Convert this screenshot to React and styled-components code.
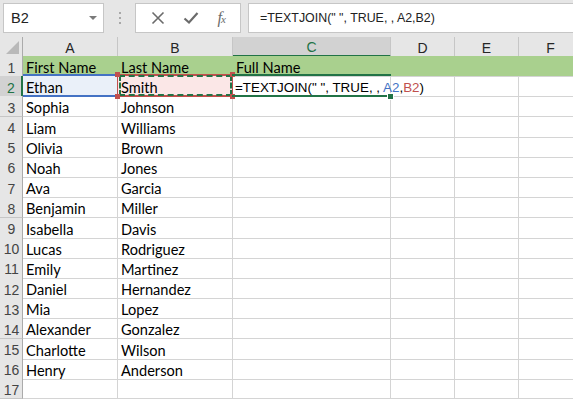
import React from "react";
import styled, { createGlobalStyle } from "styled-components";

const GlobalStyle = createGlobalStyle`
  html, body {
    margin: 0;
    padding: 0;
    background: #ffffff;
    overflow: hidden;
  }
  body {
    font-family: "Liberation Sans", Arial, sans-serif;
  }
`;

const GREEN = "#217346";
const GRID = "#d4d4d4";
const RED = "#c0504d";
const BLUE = "#4472c4";
const HEAD_FILL = "#a9d08e";

const COLS = [
  { key: "A", width: 95 },
  { key: "B", width: 115 },
  { key: "C", width: 158 },
  { key: "D", width: 64 },
  { key: "E", width: 64 },
  { key: "F", width: 64 },
];
const TEMPLATE = `23px ${COLS.map((c) => c.width + "px").join(" ")}`;

const PEOPLE = [
  ["Ethan", "Smith"],
  ["Sophia", "Johnson"],
  ["Liam", "Williams"],
  ["Olivia", "Brown"],
  ["Noah", "Jones"],
  ["Ava", "Garcia"],
  ["Benjamin", "Miller"],
  ["Isabella", "Davis"],
  ["Lucas", "Rodriguez"],
  ["Emily", "Martinez"],
  ["Daniel", "Hernandez"],
  ["Mia", "Lopez"],
  ["Alexander", "Gonzalez"],
  ["Charlotte", "Wilson"],
  ["Henry", "Anderson"],
];

// ---------- formula bar ----------
const Page = styled.div`
  width: 573px;
  height: 399px;
  overflow: hidden;
  background: #e6e6e6;
`;

const Toolbar = styled.div`
  height: 37px;
  display: flex;
  align-items: flex-start;
  padding: 3px 0 0 3px;
  box-sizing: border-box;
`;

const Box = styled.div`
  height: 30px;
  box-sizing: border-box;
  background: #ffffff;
  border: 1px solid #c6c6c6;
  display: flex;
  align-items: center;
`;

const NameBox = styled(Box)`
  width: 101px;
  padding: 0 6px 0 7px;
  justify-content: space-between;
  font-size: 14.5px;
  color: #222;
`;

const Caret = styled.span`
  width: 0;
  height: 0;
  border-left: 4px solid transparent;
  border-right: 4px solid transparent;
  border-top: 4px solid #7a7a7a;
`;

const Grip = styled.div`
  width: 31px;
  height: 30px;
  display: flex;
  flex-direction: column;
  align-items: center;
  justify-content: center;
  gap: 3px;
  span {
    width: 2px;
    height: 2px;
    background: #a8a8a8;
  }
`;

const Actions = styled(Box)`
  width: 106px;
  justify-content: space-around;
  padding: 0 6px;
  color: #6b6b6b;
`;

const Fx = styled.span`
  font-family: "Liberation Serif", "Times New Roman", serif;
  font-style: italic;
  font-size: 16px;
  color: #6b6b6b;
  letter-spacing: -1px;
  sub {
    font-size: 11px;
    vertical-align: 0;
  }
`;

const FormulaBox = styled(Box)`
  flex: 1;
  margin-left: 7px;
  margin-right: -4px;
  padding-left: 11px;
  font-size: 12.4px;
  color: #222;
  white-space: nowrap;
`;

// ---------- sheet ----------
const Sheet = styled.div`
  background: #ffffff;
  height: 362px;
  overflow: hidden;
`;

const Row = styled.div`
  display: grid;
  grid-template-columns: ${TEMPLATE};
  height: ${(p) => (p.$header ? "19px" : "20.2px")};
  background: ${(p) => (p.$header ? "#e6e6e6" : "#ffffff")};
`;

const Corner = styled.div`
  border-right: 1px solid #ababab;
  border-bottom: 1px solid #ababab;
  display: flex;
  align-items: flex-end;
  justify-content: flex-end;
  padding: 0 3px 2px 0;
`;

const ColHead = styled.div`
  display: flex;
  align-items: center;
  justify-content: center;
  padding-top: 2px;
  font-size: 14px;
  color: ${(p) => (p.$active ? GREEN : "#262626")};
  background: ${(p) => (p.$active ? "#d2d2d2" : "#e6e6e6")};
  border-right: 1px solid #c6c6c6;
  border-bottom: ${(p) => (p.$active ? `2px solid ${GREEN}` : "1px solid #ababab")};
`;

const RowHead = styled.div`
  display: flex;
  align-items: center;
  justify-content: center;
  padding: 3px 0 0 1px;
  font-size: 14px;
  color: ${(p) => (p.$active ? GREEN : "#444444")};
  background: ${(p) => (p.$active ? "#d2d2d2" : "#e6e6e6")};
  border-bottom: 1px solid #c6c6c6;
  border-right: ${(p) => (p.$active ? `2px solid ${GREEN}` : "1px solid #ababab")};
`;

const Cell = styled.div`
  position: relative;
  display: flex;
  align-items: center;
  padding: 3px 3px 0;
  font-family: Lato, "Liberation Sans", sans-serif;
  font-size: 14.6px;
  color: #000000;
  white-space: nowrap;
  background: ${(p) => p.$fill || "transparent"};
  border-right: 1px solid ${(p) => (p.$fill === HEAD_FILL ? HEAD_FILL : GRID)};
  border-bottom: 1px solid ${GRID};
  z-index: ${(p) => (p.$top ? 2 : 0)};
`;

const Frame = styled.span`
  position: absolute;
  left: ${(p) => p.$l}px;
  right: ${(p) => p.$r}px;
  top: -2px;
  bottom: -1px;
  pointer-events: none;
  border-top: 2px solid ${(p) => p.$color};
  border-bottom: 2px solid ${(p) => p.$color};
  border-left: ${(p) => (p.$sides ? `1px solid ${p.$color}` : "none")};
  border-right: ${(p) => (p.$sides ? `1px solid ${p.$color}` : "none")};
`;

const Ants = styled.span`
  position: absolute;
  left: 1px;
  right: 0;
  top: -1px;
  bottom: 0;
  border: 2px dashed ${GREEN};
  pointer-events: none;
`;

const Handle = styled.span`
  position: absolute;
  width: 5px;
  height: 5px;
  background: ${(p) => p.$color};
  ${(p) => (p.$v === "t" ? "top: -4px;" : "bottom: -3px;")}
  ${(p) => (p.$h === "l" ? "left: -3px;" : "right: -3px;")}
  outline: ${(p) => (p.$ring ? "1px solid #ffffff" : "none")};
  z-index: 3;
`;

const Formula = styled.span`
  font-family: "Liberation Sans", Arial, sans-serif;
  font-size: 13.4px;
  margin-left: -1px;
`;

const Ref = styled.span`
  color: ${(p) => p.$color};
`;

function FormulaText() {
  return (
    <>
      =TEXTJOIN(" ", TRUE, , <Ref $color={BLUE}>A2</Ref>,<Ref $color={RED}>B2</Ref>)
    </>
  );
}

export default function App() {
  const rows = [
    ["First Name", "Last Name", "Full Name"],
    ...PEOPLE.map((p) => [p[0], p[1], ""]),
    ["", "", ""],
  ];

  return (
    <>
      <GlobalStyle />
      <Page>
        <Toolbar>
          <NameBox>
            B2
            <Caret />
          </NameBox>
          <Grip>
            <span />
            <span />
            <span />
          </Grip>
          <Actions>
            <svg width="14" height="14" viewBox="0 0 14 14">
              <path d="M1.5 1.5 L12.5 12.5 M12.5 1.5 L1.5 12.5" stroke="#6b6b6b" strokeWidth="1.6" fill="none" />
            </svg>
            <svg width="16" height="14" viewBox="0 0 16 14">
              <path d="M1.5 7.5 L6 11.5 L14.5 2" stroke="#6b6b6b" strokeWidth="2.2" fill="none" />
            </svg>
            <Fx>
              f<sub>x</sub>
            </Fx>
          </Actions>
          <FormulaBox>=TEXTJOIN(" ", TRUE, , A2,B2)</FormulaBox>
        </Toolbar>

        <Sheet>
          <Row $header>
            <Corner>
              <svg width="13" height="13" viewBox="0 0 13 13">
                <path d="M13 0 L13 13 L0 13 Z" fill="#b9b9b9" />
              </svg>
            </Corner>
            {COLS.map((c) => (
              <ColHead key={c.key} $active={c.key === "C"}>
                {c.key}
              </ColHead>
            ))}
          </Row>

          {rows.map((r, i) => {
            const n = i + 1;
            const editRow = n === 2;
            const fill = n === 1 ? HEAD_FILL : undefined;
            return (
              <Row key={n}>
                <RowHead $active={editRow}>{n}</RowHead>
                <Cell $fill={editRow ? "#eaf0f9" : fill}>
                  {r[0]}
                  {editRow && <Frame $color={BLUE} $l={0} $r={-1} />}
                </Cell>
                <Cell $fill={editRow ? "#fbe7e7" : fill} $top={editRow}>
                  {r[1]}
                  {editRow && (
                    <>
                      <Frame $color={RED} $l={-1} $r={-1} $sides />
                      <Ants />
                      <Handle $color={RED} $v="t" $h="l" />
                      <Handle $color={RED} $v="t" $h="r" />
                      <Handle $color={RED} $v="b" $h="l" />
                      <Handle $color={RED} $v="b" $h="r" />
                    </>
                  )}
                </Cell>
                <Cell $fill={fill} $top={editRow}>
                  {editRow ? (
                    <>
                      <Formula>
                        <FormulaText />
                      </Formula>
                      <Frame $color={GREEN} $l={-1} $r={-1} />
                      <Handle $color={GREEN} $v="b" $h="r" $ring />
                    </>
                  ) : (
                    r[2]
                  )}
                </Cell>
                <Cell $fill={fill} />
                <Cell $fill={fill} />
                <Cell $fill={fill} />
              </Row>
            );
          })}
        </Sheet>
      </Page>
    </>
  );
}
